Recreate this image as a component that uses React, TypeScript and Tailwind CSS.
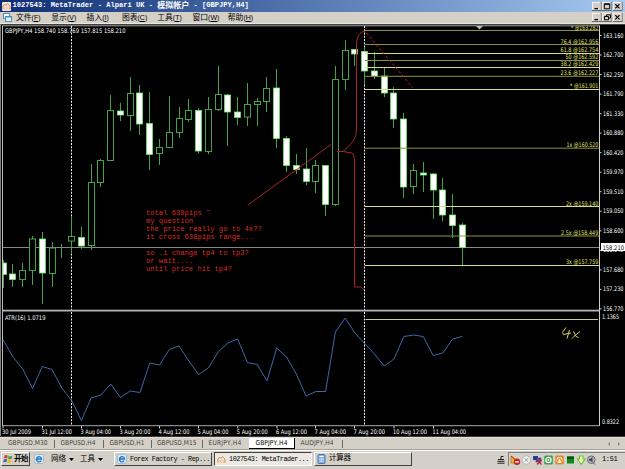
import type { ReactNode } from 'react';

// x of the first bar and distance between bars
const FIRST_X = 3.2;
const STEP = 9.77;

// high, body top, body bottom, low, bearish
type Candle = [number, number, number, number, boolean];

const candles: Candle[] = [
  [260, 263, 274.5, 288, true],
  [264, 274, 279.5, 287, true],
  [263, 270.5, 279.5, 287, false],
  [236, 239, 270.5, 285, false],
  [232, 239, 273, 304, true],
  [242, 248, 273.5, 287, false],
  [244, 248, 248, 258, false],
  [216, 236.5, 241, 253, false],
  [227, 237.5, 246, 249, true],
  [164, 182.5, 245.5, 250, false],
  [159, 160.5, 182.5, 187, false],
  [95, 110.5, 160.5, 160.5, false],
  [103, 111, 115, 121, true],
  [77, 93.5, 115.5, 131, false],
  [85, 93, 124, 135, true],
  [92, 123.5, 154.5, 170, true],
  [139, 147.5, 153.5, 165, false],
  [96, 132.5, 147.5, 147.5, false],
  [107, 118.5, 132.5, 138, false],
  [99, 110.5, 119.5, 122, false],
  [108, 110.5, 151, 153.5, true],
  [97, 109.5, 151.5, 154, false],
  [66, 94.5, 109.5, 111, false],
  [94, 95, 112, 146, true],
  [97, 112, 117.5, 125, true],
  [83, 104.5, 117, 126, false],
  [98, 101.5, 104.5, 126, false],
  [77, 88.5, 101.5, 112, false],
  [69, 88, 138.5, 148, true],
  [136, 138.5, 165.5, 172, true],
  [154, 165.5, 169.5, 174, true],
  [148, 169, 181.5, 185, true],
  [160, 165.5, 181.5, 193, false],
  [165, 165.5, 204.5, 216, true],
  [66, 79.5, 204.5, 206, false],
  [40, 50.5, 79.5, 90, false],
  [49, 49.5, 54, 66, true],
  [47, 51.5, 71, 84, true],
  [52, 71, 76, 79, true],
  [68, 76, 93, 97, true],
  [87, 93, 119, 128, true],
  [113, 119, 187, 198, true],
  [164, 170.5, 186.5, 194, false],
  [162, 173, 175, 192, true],
  [173, 174, 190, 219, true],
  [178, 190, 215, 221, true],
  [194, 215, 225.5, 238, true],
  [223, 225, 247.5, 265, true],
];

const atr = [
  340, 357, 369, 388.5, 366.5, 369.5, 388, 400.5, 420.5, 398, 395, 384, 397.5, 391, 392.5, 363,
  365, 349.5, 346, 361, 374.5, 368, 352, 343, 339, 362.5, 364.5, 381, 348, 357, 374, 396, 391.5,
  391.5, 332, 318, 333, 343.5, 354, 366, 359, 336.5, 335, 336.5, 355.5, 353, 339, 336.5,
];

const levels = [
  { y: 30.5, text: '* @163.282', x: 571, bright: false, labelY: 29.5 },
  { y: 44.5, text: '76.4 @162.956', x: 560.5, bright: false, labelY: 43.5 },
  { y: 53.5, text: '61.8 @162.754', x: 560.5, bright: true, labelY: 52.3 },
  { y: 60.5, text: '50 @162.592', x: 565.5, bright: false, labelY: 59.3 },
  { y: 67.5, text: '38.2 @162.429', x: 560.5, bright: true, labelY: 66.3 },
  { y: 76.3, text: '23.6 @162.227', x: 560.5, bright: false, labelY: 75 },
  { y: 89.5, text: '* @161.901', x: 570, bright: true, labelY: 88 },
  { y: 148.2, text: '1x @160.520', x: 566.5, bright: false, labelY: 147 },
  { y: 206.5, text: '2x @159.140', x: 566, bright: true, labelY: 205.5 },
  { y: 236, text: '2.5x @158.449', x: 561, bright: false, labelY: 234.7 },
  { y: 265.5, text: '3x @157.759', x: 566, bright: true, labelY: 264.3 },
];

const prices = [
  '163.160', '162.700', '162.250', '161.790', '161.330', '160.880', '160.420', '159.970',
  '159.510', '159.050', '158.600', '158.140', '157.680', '157.230', '156.770',
];

const times = [
  { x: 2, w: 29, text: '30 Jul 2009' },
  { x: 41.5, w: 30.5, text: '31 Jul 12:00' },
  { x: 80.5, w: 30.5, text: '3 Aug 04:00' },
  { x: 119.5, w: 31, text: '3 Aug 20:00' },
  { x: 158.5, w: 31, text: '4 Aug 12:00' },
  { x: 197.5, w: 31, text: '5 Aug 04:00' },
  { x: 236.8, w: 31, text: '5 Aug 20:00' },
  { x: 276, w: 31, text: '6 Aug 12:00' },
  { x: 314.5, w: 31.5, text: '7 Aug 04:00' },
  { x: 353.5, w: 31.5, text: '7 Aug 20:00' },
  { x: 393, w: 34, text: '10 Aug 12:00' },
  { x: 432.5, w: 33.5, text: '11 Aug 04:00' },
];

const notes = [
  { y: 215.3, text: 'total 638pips' },
  { y: 223.3, text: 'my question' },
  { y: 231.3, text: 'the price really go to 4x??' },
  { y: 239.3, text: 'it cross 638pips range...' },
  { y: 255, text: 'so .i change tp4 to tp3?' },
  { y: 263, text: 'or wait....' },
  { y: 271, text: 'until price hit tp4?' },
];

const menu = [
  ['文件', 'F'],
  ['显示', 'V'],
  ['插入', 'I'],
  ['图表', 'C'],
  ['工具', 'T'],
  ['窗口', 'W'],
  ['帮助', 'H'],
];

const Label = ({
  x,
  y,
  w,
  fill = '#fff',
  children,
}: {
  x: number;
  y: number;
  w: number;
  fill?: string;
  children: string;
}) => (
  <text x={x} y={y} textLength={w} lengthAdjust="spacingAndGlyphs" fill={fill} fontSize="6.3">
    {children}
  </text>
);

const Chart = () => (
  <svg
    viewBox="0 24 625 414"
    className="block h-[414px] w-[625px] shrink-0 font-['DejaVu_Sans_Condensed','DejaVu_Sans',sans-serif]"
  >
    <rect x="0" y="24" width="625" height="414" fill="#000" />
    <rect x="0" y="24" width="625" height="1" fill="#404040" />
    <rect x="0" y="24" width="1" height="413" fill="#808080" />
    <rect x="2" y="25" width="598" height="1.4" fill="#777" />
    <rect x="2" y="26" width="1" height="400" fill="#bdbdbd" />

    {/* period separators */}
    {[71.5, 364.5].map((x) => (
      <line key={x} x1={x} x2={x} y1="26" y2="425" stroke="#f0f0f0" strokeDasharray="2 1.25" />
    ))}
    <path d="M476 26h7l-3.5 3.5z" fill="#b4bccb" />

    <line x1="3" x2="599" y1="247.5" y2="247.5" stroke="#84888c" />

    {candles.map(([high, top, bottom, low, bearish], i) => {
      const x = Math.floor(FIRST_X + STEP * i) + 0.5;
      const left = i === 0 ? 3 : x - 3;
      return (
        <g key={i} stroke="#46a246">
          <line x1={x} x2={x} y1={high} y2={top} />
          <line x1={x} x2={x} y1={bottom} y2={low} />
          <rect
            x={left}
            y={top}
            width={x + 3 - left}
            height={bottom - top}
            fill={bearish ? '#fff' : '#000'}
            stroke={bearish ? '#6be86b' : '#46a246'}
            strokeWidth={bearish ? 0.8 : 1}
          />
        </g>
      );
    })}

    {levels.map((l) => (
      <g key={l.text}>
        <line x1="365" x2="599" y1={l.y} y2={l.y} stroke={l.bright ? '#d8dc84' : '#8f9144'} />
        <Label x={l.x} y={l.labelY} w={598.3 - l.x} fill="#e2e46c">
          {l.text}
        </Label>
      </g>
    ))}
    <rect x="560" y="24" width="39" height="1.5" fill="#505050" />

    <Label x={5} y={32.8} w={120.5}>
      GBPJPY,H4  158.740 158.769 157.815 158.210
    </Label>

    {/* hand-drawn bracket and pointer */}
    <g fill="none" stroke="#a82626">
      <path d="M248 205L331 144.5" />
      <path d="M365 31C359 32 356.5 38 356.5 45V128C356.5 140 351 144 343 151.5H337" />
      <path d="M343 151.5L352 153Q354.5 155 354.5 162V287H360.5L364 289.5" />
      <path d="M366.5 33L413 88" strokeDasharray="3 2" />
    </g>
    <g className="font-['Liberation_Mono',monospace]" fill="#dc2c24" fontSize="7.15">
      {notes.map((n) => (
        <text key={n.text} x="146" y={n.y}>
          {n.text}
        </text>
      ))}
      <text x="206" y="213">
        ~
      </text>
    </g>

    {/* indicator window */}
    <rect x="3" y="309.7" width="597" height="1.8" fill="#b4b4b4" />
    <Label x={5} y={319.8} w={40.5}>
      ATR(16) 1.0719
    </Label>
    <polyline
      points={atr.map((y, i) => `${FIRST_X + STEP * i},${y}`).join(' ')}
      fill="none"
      stroke="#4068a8"
    />
    <line x1="365.5" x2="598" y1="319.5" y2="319.5" stroke="#c6d27c" />
    <path
      d="M566 327.5L562.5 332.5L563.5 334.5L571 333M569.5 330L567 338.5M573.5 331.5L576 336.5L578.5 337.5M580 331.5L575.5 335L572 338.5"
      fill="none"
      stroke="#d6d45c"
    />

    {/* axes */}
    <line x1="599.5" x2="599.5" y1="26" y2="426" stroke="#d0d0d0" />
    <line x1="3" x2="600" y1="425.7" y2="425.7" stroke="#a8a8a8" />
    {prices.map((p, i) => (
      <g key={p}>
        <line x1="600" x2="601.5" y1={35.5 + i * 19.53} y2={35.5 + i * 19.53} stroke="#ddd" />
        <Label x={603} y={37.6 + i * 19.53} w={20.5}>
          {p}
        </Label>
      </g>
    ))}
    {/* last price covers most of the scale value behind it */}
    <rect x="601" y="243" width="24" height="8" fill="#fff" />
    <Label x={602.5} y={249.5} w={21.5} fill="#000">
      158.210
    </Label>
    <Label x={602} y={318.5} w={17}>
      1.1365
    </Label>
    <Label x={602} y={423.8} w={17}>
      0.8322
    </Label>
    {times.map((t) => (
      <g key={t.text}>
        <line x1={t.x + 1} x2={t.x + 1} y1="426" y2="428.5" stroke="#ccc" />
        <Label x={t.x} y={434} w={t.w}>
          {t.text}
        </Label>
      </g>
    ))}
    <rect x="0" y="436" width="625" height="1" fill="#383838" />
    <rect x="0" y="437" width="625" height="1" fill="#e4e0da" />
  </svg>
);

const WindowButtons = ({ restore = false }: { restore?: boolean }) => (
  <svg viewBox="0 0 31 9" className="mr-0.5 block h-[9px] w-[31px]">
    {[0, 10, 21].map((x) => (
      <g key={x}>
        <rect x={x} y="0" width="9.5" height="9" fill="#55534f" />
        <rect x={x} y="0" width="8.5" height="8" fill="#fff" />
        <rect x={x + 0.7} y="0.7" width="8" height="7.5" fill="#d4d0c8" />
      </g>
    ))}
    <path d="M2.5 6.6H6" stroke="#000" strokeWidth="1.3" />
    {restore ? (
      <path d="M14.5 3V1.8H18.5V5H17M12.5 3.5H16.5V6.8H12.5Z" fill="none" stroke="#000" />
    ) : (
      <path d="M12.3 1.8H17.7V6.8H12.3ZM12.3 2.3H17.7" fill="none" stroke="#000" />
    )}
    <path d="M23.3 2.2L27.5 6.4M27.5 2.2L23.3 6.4" stroke="#000" strokeWidth="1.2" />
  </svg>
);

const TerminalIcon = () => (
  <svg viewBox="0 0 9 9" className="block size-[9px] shrink-0">
    <rect width="9" height="9" rx="1" fill="#f5e8d4" />
    <path d="M1 7.5V4L2.5 2L4 3.5L5.5 1.5L8 4V7.5" fill="none" stroke="#c98a5c" />
    <path d="M3 8V5M5 8V4.5M7 8V6" stroke="#e0b48c" strokeWidth="0.8" />
  </svg>
);

const BrowserIcon = () => (
  <svg viewBox="0 0 10 10" className="block size-[10px] shrink-0">
    <rect
      x="0.5"
      y="0.5"
      width="9"
      height="9"
      rx="1"
      fill="#dceaf5"
      stroke="#7fa6c4"
      strokeWidth="0.6"
    />
    <path d="M7.2 6.7A2.6 2.6 0 1 1 7.6 5H2.6" fill="none" stroke="#1f74b8" strokeWidth="1.3" />
  </svg>
);

const TabBar = () => (
  <div className="flex h-[12px] shrink-0 items-center border-b border-[#a5a199] bg-[#d4d0c8] font-['DejaVu_Sans_Condensed','DejaVu_Sans',sans-serif] text-[6.6px] leading-none whitespace-nowrap text-[#45423d]">
    <span className="w-[47px] pl-2">GBPUSD,M30</span>
    <span className="ml-[7px] h-2 w-px bg-[#6b6862]" />
    <span className="ml-[5.5px] w-[35px]">GBPUSD,H4</span>
    <span className="ml-[7px] h-2 w-px bg-[#6b6862]" />
    <span className="ml-[6px] w-[35px]">GBPUSD,H1</span>
    <span className="ml-[6px] h-2 w-px bg-[#6b6862]" />
    <span className="ml-[5.5px] w-[39px]">GBPUSD,M15</span>
    <span className="ml-[6px] h-2 w-px bg-[#6b6862]" />
    <span className="ml-[5.5px] w-[40.5px] tracking-[0.2px]">EURJPY,H4</span>
    <span className="flex h-full w-[46px] items-center justify-center border-r border-b border-black bg-white tracking-[0.1px] text-black">
      GBPJPY,H4
    </span>
    <span className="ml-[5.5px] w-[34px] tracking-[0.15px]">AUDJPY,H4</span>
    <span className="ml-[7px] h-2 w-px bg-[#6b6862]" />
    <svg viewBox="0 0 14 6" className="mr-1 ml-auto block h-[6px] w-[14px]">
      <path d="M3 1V5L1 3ZM11 1V5L13 3Z" fill="#8a867e" />
    </svg>
  </div>
);

const TaskButton = ({
  active = false,
  icon,
  children,
}: {
  active?: boolean;
  icon: ReactNode;
  children: ReactNode;
}) => (
  <div
    className={`flex h-[14px] w-[98px] shrink-0 items-center gap-[3px] border pl-0.5 whitespace-pre ${
      active
        ? 'border-t-[#404040] border-r-white border-b-white border-l-[#404040] bg-[#ebe8e3]'
        : 'border-t-white border-r-[#404040] border-b-[#404040] border-l-white bg-[#d4d0c8]'
    }`}
  >
    {icon}
    {children}
  </div>
);

const Tray = () => (
  <svg viewBox="0 0 88 12" className="block h-3 w-[88px] shrink-0">
    <path d="M2 9V2L6 5V9Z" fill="#e8b820" stroke="#9a6a10" strokeWidth="0.6" />
    <path d="M2 2L7 6" stroke="#d02020" />
    <circle cx="8" cy="7.8" r="3.2" fill="#cc2020" />
    <rect x="6" y="7.2" width="4" height="1.3" fill="#fff" />

    <circle cx="17.3" cy="6" r="4.2" fill="#eee" stroke="#aaa" strokeWidth="0.8" />
    <path d="M15.7 4.2L19 7.8M19 4.2L15.7 7.8" stroke="#999" />

    <rect x="24" y="2" width="5" height="4" fill="#283c9a" />
    <rect x="27" y="4" width="5" height="4" fill="#4358b2" stroke="#1b2a6e" strokeWidth="0.5" />
    <path d="M28 6L32.5 10.5M32.5 6L28 10.5" stroke="#d42020" strokeWidth="1.2" />

    <rect x="35.3" y="1.5" width="8.5" height="9" rx="1.2" fill="#3c9e4c" />
    <circle cx="39.5" cy="6" r="2.6" fill="none" stroke="#fff" strokeWidth="1.2" />
    <circle cx="39.5" cy="6" r="0.9" fill="#fff" />

    <rect x="46.3" y="1.5" width="8.5" height="9" rx="1.2" fill="#e08a28" />
    <circle cx="50.5" cy="6" r="3" fill="#fff3d8" />
    <path d="M48.8 7.5V5.5L50.5 4.2L52.2 5.5V7.5" fill="none" stroke="#c05a10" />

    <rect x="58" y="2.5" width="7" height="7" fill="#0a8a1c" />
    <rect x="58" y="2.5" width="7" height="2.5" fill="#045012" />

    <path
      d="M70.5 2H74V5H76L72.2 10.5L68.5 5H70.5Z"
      fill="#f4ffd0"
      stroke="#6cc02c"
      strokeWidth="1.1"
    />

    <circle cx="82.3" cy="5.7" r="3.8" fill="#b8b8c0" stroke="#686878" />
    <path d="M80 4.8H81.5L83.5 3V8.5L81.5 6.8H80Z" fill="#44444c" />
    <path d="M84 9L86.5 10.5" stroke="#777" />
  </svg>
);

const Taskbar = () => (
  <div className="flex h-[19px] shrink-0 items-start border-t border-white bg-[#d4d0c8] pt-px pl-px font-['Liberation_Sans','Noto_Sans_CJK_SC',sans-serif] text-[8px] leading-none whitespace-nowrap text-black">
    <div className="flex h-[14px] w-[29px] items-center gap-px border border-t-white border-r-[#404040] border-b-[#404040] border-l-white pl-px font-bold">
      <svg viewBox="0 0 10 10" className="block size-[10px] shrink-0">
        <path d="M1.5 1.5Q3 .5 4.8 1.5L4.2 4.5Q2.5 3.7 1 4.5Z" fill="#d8482c" />
        <path d="M5.5 1.8Q7.5 2.8 9.3 1.8L8.6 5Q7 5.7 5 4.8Z" fill="#4ca43c" />
        <path d="M.9 5.3Q2.5 4.5 4.1 5.3L3.5 8.3Q2 7.5.2 8.3Z" fill="#3468c8" />
        <path d="M4.8 5.6Q6.8 6.5 8.4 5.7L7.8 8.7Q6 9.4 4.2 8.5Z" fill="#f0bc28" />
      </svg>
      <span className="text-[7.5px] tracking-[-0.4px]">开始</span>
    </div>
    <div className="mt-0.5 ml-1 w-[17px]">
      <BrowserIcon />
    </div>
    <div className="flex h-[14px] w-[29px] items-center gap-[3px]">
      <span className="text-[7.5px]">网络</span>
      <svg viewBox="0 0 5 3" className="h-[3px] w-[5px]">
        <path d="M0 0H5L2.5 3Z" />
      </svg>
    </div>
    <div className="flex h-[14px] w-[34px] items-center gap-[3px]">
      <span className="text-[7.5px]">工具</span>
      <svg viewBox="0 0 5 3" className="h-[3px] w-[5px]">
        <path d="M0 0H5L2.5 3Z" />
      </svg>
    </div>
    <div className="flex gap-[2px] font-['Liberation_Mono','Noto_Sans_CJK_SC',monospace] text-[6.8px] tracking-[-0.45px]">
      <TaskButton icon={<BrowserIcon />}>Forex Factory - Rep...</TaskButton>
      <TaskButton active icon={<TerminalIcon />}>
        1027543: MetaTrader...
      </TaskButton>
      <TaskButton
        icon={
          <svg viewBox="0 0 9 10" className="block h-[10px] w-[9px]">
            <rect x="1" y="0.5" width="7" height="9" rx="1" fill="#8cb4e4" stroke="#4a74ac" />
            <path d="M2.5 2.5H6.5" stroke="#fff" />
            <path d="M2.5 5H6.5M2.5 7H6.5" stroke="#e8f0fa" strokeDasharray="1 .5" />
          </svg>
        }
      >
        <span className="text-[7.5px] tracking-[-0.2px]">计算器</span>
      </TaskButton>
    </div>
    <div className="ml-auto flex h-[14px] items-center">
      <svg viewBox="0 0 8 9" className="mr-[3px] block h-[9px] w-2">
        <path d="M1 4.5H7M4 4V1.5H6.5M.5 6.3H7.5M.5 8.2H7.5" fill="none" stroke="#222" />
      </svg>
      <div className="flex h-[14px] w-[117px] items-center border-t border-l border-[#808080]">
        <Tray />
        <span className="ml-[5px] font-['Liberation_Mono',monospace] text-[7.1px] tracking-[-0.4px]">
          1:51
        </span>
      </div>
    </div>
  </div>
);

const App = () => (
  <div className="flex h-[469px] w-[625px] flex-col overflow-hidden bg-[#d4d0c8]">
    <div className="flex h-[12px] shrink-0 items-center justify-between bg-linear-to-r from-[#0f2c74] to-[#a6caf0] pl-0.5 leading-none text-white">
      <div className="flex items-center gap-[1.5px] font-['Liberation_Mono','Noto_Sans_CJK_SC',monospace] text-[7.1px] font-bold whitespace-pre">
        <TerminalIcon />
        <span className="flex items-center">
          {'1027543: MetaTrader - Alpari UK - '}
          <span className="text-[8px]">模拟帐户</span>
          {' - [GBPJPY,H4]'}
        </span>
      </div>
      <WindowButtons />
    </div>

    <div className="flex h-[12px] shrink-0 items-center justify-between border-b border-[#e9e6e0] bg-[#d4d0c8] pl-[3px] leading-none text-black">
      <div className="flex items-center font-['Liberation_Sans','Noto_Sans_CJK_SC',sans-serif] text-[7.8px]">
        <svg viewBox="0 0 9 9" className="mr-[4px] block size-[9px]">
          <rect x="0.5" y="0.5" width="6" height="5" fill="#fff" stroke="#4a90b8" />
          <rect x="2.5" y="3.5" width="6" height="5" fill="#e4f2fa" stroke="#4a90b8" />
          <path d="M2.5 4H8.5" stroke="#4a90b8" />
        </svg>
        {menu.map(([title, key]) => (
          <span key={key} className="w-[35.3px] whitespace-nowrap">
            {title}
            <span className="text-[7px]">
              (<span className="underline">{key}</span>)
            </span>
          </span>
        ))}
      </div>
      <WindowButtons restore />
    </div>

    <Chart />
    <TabBar />
    <Taskbar />
  </div>
);

export default App;
